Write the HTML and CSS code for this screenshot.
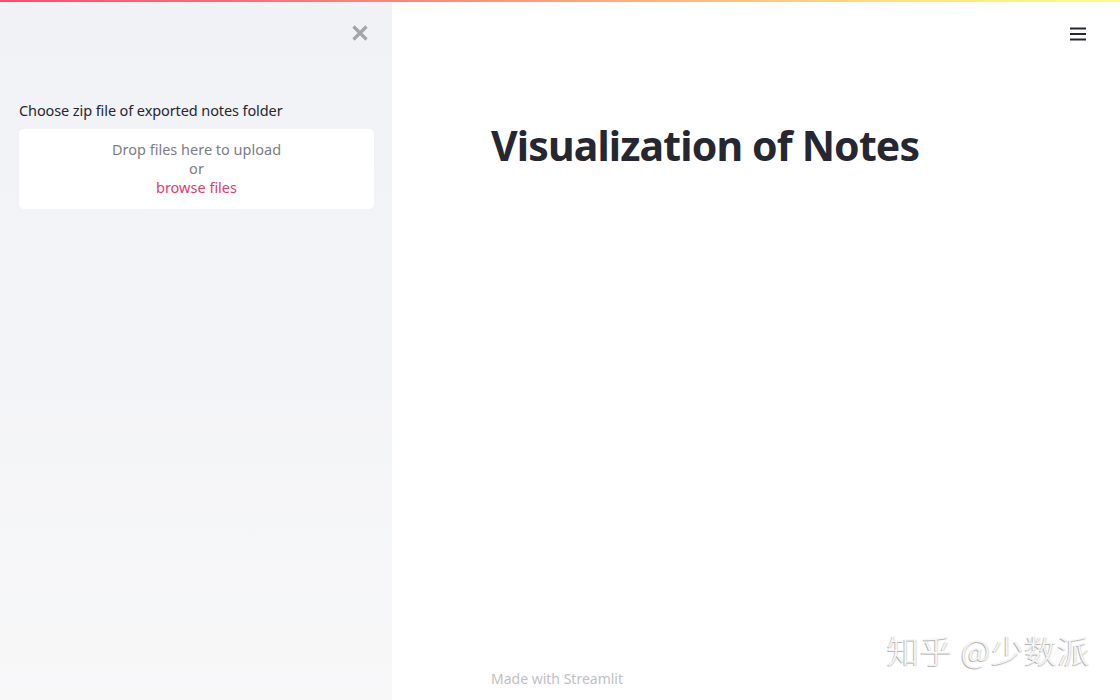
FILE: index.html
```html
<!DOCTYPE html>
<html>
<head>
<meta charset="utf-8">
<link rel="stylesheet" href="styles.css">
</head>
<body>
<div class="decoration"></div>
<div class="app">
  <aside class="sidebar">
    <div class="close-row">
      <svg class="close" width="18" height="18" viewBox="0 0 18 18"><path d="M2.5 2.5L15.5 15.5M15.5 2.5L2.5 15.5" stroke="#a3a5ab" stroke-width="3.2" stroke-linecap="butt"/></svg>
    </div>
    <label class="label">Choose zip file of exported notes folder</label>
    <div class="dropzone">
      <span class="dz-text">Drop files here to upload</span>
      <span class="dz-text">or</span>
      <span class="dz-link">browse files</span>
    </div>
  </aside>
  <main class="main">
    <div class="toolbar">
      <svg width="18" height="16" viewBox="0 0 18 16"><path d="M1 2.5H17M1 8H17M1 13.5H17" stroke="#262730" stroke-width="2"/></svg>
    </div>
    <h1 class="title">Visualization of Notes</h1>
    <div class="spacer"></div>
    <footer class="footer">Made with Streamlit</footer>
    <div class="watermark">知乎 @少数派</div>
  </main>
</div>
</body>
</html>
```
FILE: styles.css
```css
html, body {
  margin: 0;
  padding: 0;
  width: 1120px;
  height: 700px;
  overflow: hidden;
  background: #ffffff;
  font-family: "Noto Sans", "Open Sans", sans-serif;
}
.decoration {
  position: absolute;
  top: 0;
  left: 0;
  right: 0;
  height: 2px;
  background: linear-gradient(90deg, #ff4b6e 0%, #ff8a80 40%, #ffe27a 80%, #fffd80 100%);
  z-index: 5;
}
.app {
  display: flex;
  height: 700px;
}
.sidebar {
  width: 392px;
  flex: none;
  box-sizing: border-box;
  padding: 0 19px 0 19px;
  background: linear-gradient(180deg, #f0f2f6 0%, #f3f4f7 50%, #f8f8f9 100%);
  display: flex;
  flex-direction: column;
}
.close-row {
  display: flex;
  justify-content: flex-end;
  padding: 24px 4px 0 0;
  height: 18px;
}
.label {
  margin-top: 58px;
  font-size: 14.5px;
  color: #262730;
  line-height: 20px;
  letter-spacing: -0.1px;
}
.dropzone {
  margin-top: 9px;
  background: #ffffff;
  border-radius: 5px;
  height: 80px;
  box-sizing: border-box;
  padding-top: 11px;
  display: flex;
  flex-direction: column;
  align-items: center;
  font-size: 14.5px;
  line-height: 19px;
  width: 355px;
}
.dz-text {
  color: #7c7e86;
}
.dz-link {
  color: #e23b6a;
}
.main {
  flex: 1;
  position: relative;
  display: flex;
  flex-direction: column;
  padding-left: 99px;
}
.toolbar {
  position: absolute;
  top: 25px;
  right: 33px;
}
.title {
  margin: 117px 0 0 0;
  font-size: 41px;
  font-weight: 700;
  color: #262730;
  line-height: 56px;
  letter-spacing: -0.85px;
}
.spacer {
  flex: 1;
}
.footer {
  font-size: 14px;
  color: #bfc0c5;
  line-height: 20px;
  margin-bottom: 11px;
}
.watermark {
  position: absolute;
  right: 30px;
  bottom: 28px;
  font-family: "Noto Sans CJK SC", sans-serif;
  font-size: 32px;
  font-weight: 300;
  color: #f6f6f6;
  text-shadow: -1px 1px 0 #b8b8b8, 1px 1px 1px #d8d8d8;
  letter-spacing: 1px;
}
```
